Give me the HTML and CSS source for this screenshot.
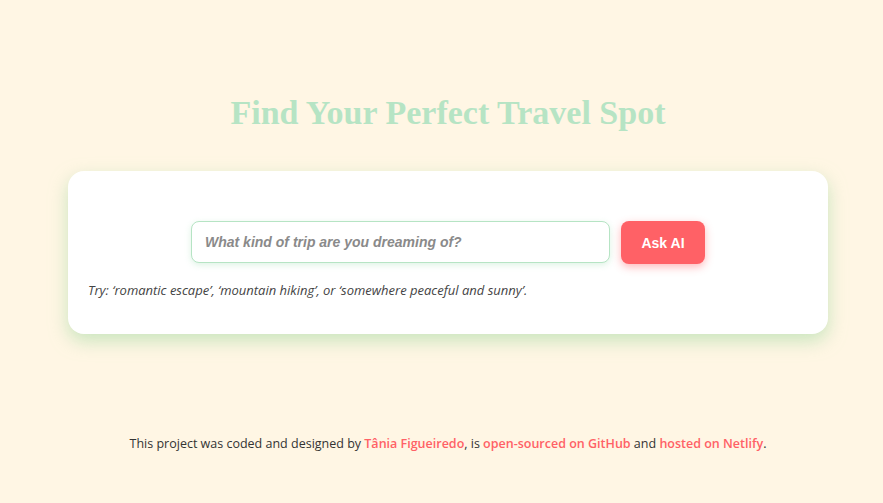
FILE: index.html
```html
<!DOCTYPE html>
<html lang="en">
<head>
<meta charset="utf-8">
<title>Find Your Perfect Travel Spot</title>
<link rel="stylesheet" href="styles.css">
</head>
<body>
<div class="container">
  <h1 class="title">Find Your Perfect Travel Spot</h1>
  <div class="card">
    <form class="search">
      <input class="search-input" type="text" placeholder="What kind of trip are you dreaming of?">
      <button class="search-btn" type="button">Ask AI</button>
    </form>
    <p class="hint">Try: ‘romantic escape’, ‘mountain hiking’, or ‘somewhere peaceful and sunny’.</p>
  </div>
  <footer class="footer">This project was coded and designed by <a href="#">Tânia Figueiredo</a>, is <a href="#">open-sourced on GitHub</a> and <a href="#">hosted on Netlify</a>.</footer>
</div>
</body>
</html>
```
FILE: styles.css
```css
* { box-sizing: border-box; }
html, body { margin: 0; padding: 0; }
body {
  background: #fff6e4;
  font-family: "Open Sans", sans-serif;
  color: #333;
  height: 503px;
  padding-left: 13px;
}
.container {
  width: 760px;
  margin: 0 auto;
  padding-top: 92px;
  display: flex;
  flex-direction: column;
}
.title {
  margin: 0;
  text-align: center;
  font-family: "Liberation Serif", serif;
  font-weight: bold;
  font-size: 34px;
  line-height: 42px;
  color: #b6e4c4;
}
.card {
  margin-top: 37px;
  background: #fff;
  border-radius: 16px;
  box-shadow: 0 7px 18px rgba(165, 218, 165, 0.6);
  padding: 50px 20px 28px 20px;
  height: 163px;
}
.search {
  display: flex;
  justify-content: center;
  gap: 11px;
  margin: 0;
}
.search-input {
  width: 419px;
  height: 42px;
  border: 1px solid #b6e4c4;
  border-radius: 8px;
  padding: 0 13px;
  font-family: "Liberation Sans", Arial, sans-serif;
  font-style: italic;
  font-weight: bold;
  font-size: 14px;
  color: #333;
  box-shadow: 0 2px 6px rgba(180, 228, 196, 0.45);
  outline: none;
}
.search-input::placeholder { color: #8a8a8a; }
.search-btn {
  width: 84px;
  height: 43px;
  border: none;
  border-radius: 8px;
  background: #ff6166;
  color: #fff;
  font-family: "Liberation Sans", Arial, sans-serif;
  font-weight: bold;
  font-size: 14px;
  box-shadow: 0 3px 8px rgba(255, 97, 102, 0.45);
}
.hint {
  margin: 17px 0 0 0;
  font-style: italic;
  font-size: 13px;
  color: #444;
}
.footer {
  margin-top: 101px;
  text-align: center;
  font-size: 12.5px;
  color: #333;
}
.footer a {
  color: #ff6166;
  font-weight: 600;
  text-decoration: none;
}
```
